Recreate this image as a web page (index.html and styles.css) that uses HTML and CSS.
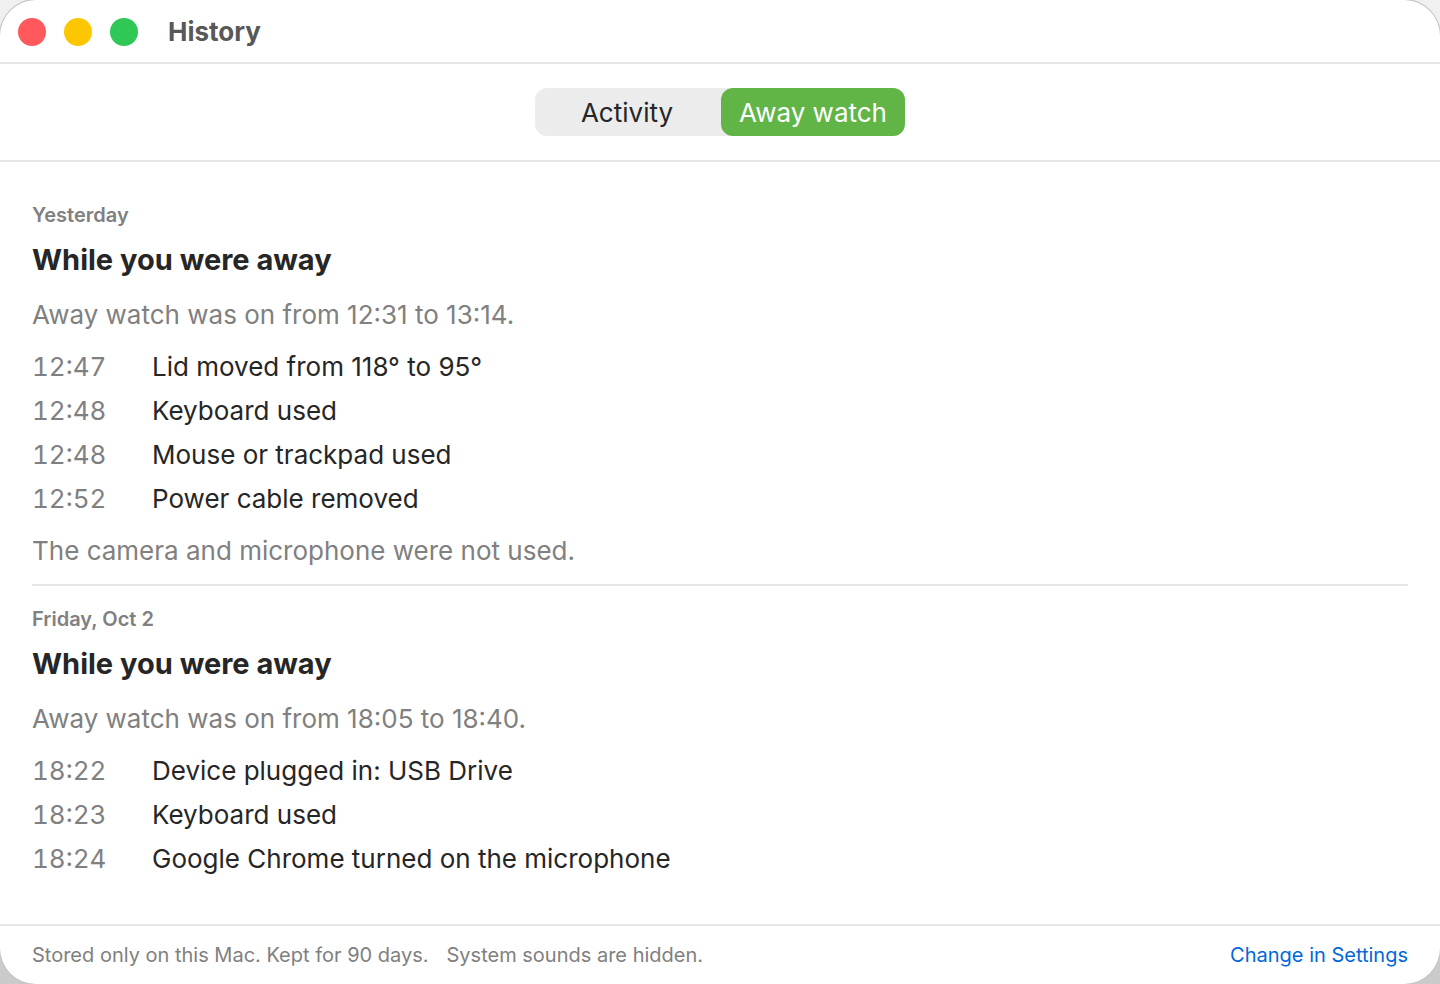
FILE: index.html
```html
<!DOCTYPE html>
<html lang="en">
<head>
  <meta charset="UTF-8" />
  <meta name="viewport" content="width=device-width, initial-scale=1" />
  <title>History</title>
  <link rel="stylesheet" href="styles.css">
</head>
<body>
  <div class="window">
    <header class="titlebar">
      <div class="lights">
        <button type="button" class="light close" aria-label="Close"></button>
        <button type="button" class="light minimize" aria-label="Minimize"></button>
        <button type="button" class="light zoom" aria-label="Zoom"></button>
      </div>
      <h1>History</h1>
    </header>

    <nav class="toolbar">
      <div class="segments">
        <button type="button" class="segment">Activity</button>
        <button type="button" class="segment active">Away watch</button>
      </div>
    </nav>

    <main>
      <section class="report">
        <p class="day">Yesterday</p>
        <h2>While you were away</h2>
        <p class="summary">Away watch was on from 12:31 to 13:14.</p>
        <ul class="events">
          <li><time>12:47</time><span>Lid moved from 118° to 95°</span></li>
          <li><time>12:48</time><span>Keyboard used</span></li>
          <li><time>12:48</time><span>Mouse or trackpad used</span></li>
          <li><time>12:52</time><span>Power cable removed</span></li>
        </ul>
        <p class="summary">The camera and microphone were not used.</p>
      </section>

      <section class="report">
        <p class="day">Friday, Oct 2</p>
        <h2>While you were away</h2>
        <p class="summary">Away watch was on from 18:05 to 18:40.</p>
        <ul class="events">
          <li><time>18:22</time><span>Device plugged in: USB Drive</span></li>
          <li><time>18:23</time><span>Keyboard used</span></li>
          <li><time>18:24</time><span>Google Chrome turned on the microphone</span></li>
        </ul>
      </section>
    </main>

    <footer>
      <p>Stored only on this Mac. Kept for 90 days.</p>
      <p>System sounds are hidden.</p>
      <a href="#settings">Change in Settings</a>
    </footer>
  </div>
</body>
</html>
```

FILE: styles.css
```css
* {
  box-sizing: border-box;
}

body {
  margin: 0;
  background: linear-gradient(#f0f0f0, #cacaca);
  font-family: Inter, "Liberation Sans", sans-serif;
  font-size: 26px;
  line-height: 32px;
  color: #262626;
}

h1, h2, p, ul {
  margin: 0;
  padding: 0;
}

button {
  border: none;
  padding: 0;
  font: inherit;
  color: inherit;
}

.window {
  display: flex;
  flex-direction: column;
  min-height: 100vh;
  background: #fff;
  border-radius: 36px;
  box-shadow: 0 0 0 1px #c4c4c4;
  overflow: hidden;
}

.titlebar {
  display: flex;
  align-items: center;
  gap: 30px;
  height: 64px;
  padding: 2px 18px 0;
  border-bottom: 2px solid #e6e6e6;
}

.lights {
  display: flex;
  gap: 18px;
}

.light {
  width: 28px;
  height: 28px;
  border-radius: 50%;
}

.close { background: #ff585d; }
.minimize { background: #fcc700; }
.zoom { background: #2fc857; }

h1 {
  font-size: 26px;
  font-weight: 700;
  color: #585858;
}

.toolbar {
  display: flex;
  justify-content: center;
  padding: 24px;
  border-bottom: 2px solid #e6e6e6;
}

.segments {
  display: flex;
  gap: 2px;
  background: #ececec;
  border-radius: 12px;
}

.segment {
  width: 184px;
  height: 48px;
  padding-top: 2px;
  background: none;
  border-radius: 12px;
}

.segment.active {
  background: #61b546;
  color: #fff;
}

main {
  flex: 1;
  padding: 20px 32px 0;
}

.report {
  padding: 17px 0;
}

.report + .report {
  border-top: 2px solid #e6e6e6;
}

.day {
  font-size: 20px;
  font-weight: 600;
  color: #808080;
}

h2 {
  margin: 13px 0 23px;
  font-size: 29px;
  font-weight: 700;
}

.summary {
  color: #808080;
}

.events {
  display: flex;
  flex-direction: column;
  gap: 12px;
  margin: 20px 0;
  list-style: none;
}

.events li {
  display: flex;
}

time {
  flex: 0 0 120px;
  color: #808080;
  font-variant-numeric: tabular-nums;
}

footer {
  display: flex;
  gap: 18px;
  padding: 13px 32px;
  border-top: 2px solid #e6e6e6;
  font-size: 20px;
  color: #808080;
}

footer a {
  margin-left: auto;
  color: #0068da;
  text-decoration: none;
}
```
